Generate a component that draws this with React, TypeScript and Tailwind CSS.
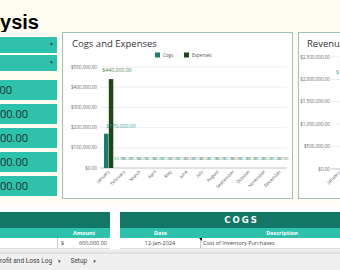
import React from "react";

const months = [
    "January", "February", "March", "April", "May", "June",
    "July", "August", "September", "October", "November", "December",
];

const kpis = [
    { value: "$1,800,000.00", end: "w-[12px]" },
    { value: "$600,000.00", end: "w-[28px]" },
    { value: "$440,000.00", end: "w-[28px]" },
    { value: "$170,000.00", end: "w-[28px]" },
    { value: "$760,000.00", end: "w-[28px]" },
];

function CogsChart() {
    const grid = [16, 36.2, 56.4, 76.6, 96.8, 117];
    const ticks = ["$500,000.00", "$400,000.00", "$300,000.00", "$200,000.00", "$100,000.00", "$0.00"];
    const slot = 187 / 12;

    return (
        <svg width="229" height="147" className="block">
            {/* legend */}
            <rect x="92" y="1.5" width="5" height="5" fill="#1b7d72" />
            <text x="100" y="6" fontSize="4.5" fill="#555">Cogs</text>
            <rect x="121" y="1.5" width="5" height="5" fill="#1f4a17" />
            <text x="129" y="6" fontSize="4.5" fill="#555">Expenses</text>

            {grid.map((y, i) => (
                <g key={i}>
                    <line x1="37" x2="224" y1={y} y2={y} stroke={i === 5 ? "#999" : "#e3e3e3"} strokeWidth="0.6" />
                    <text x="34" y={y + 1.6} fontSize="4.6" fill="#666" textAnchor="end">{ticks[i]}</text>
                </g>
            ))}

            {/* january bars */}
            <rect x="41" y="82.7" width="4.5" height="34.3" fill="#1b7d72" />
            <rect x="45.8" y="28.1" width="4.5" height="88.9" fill="#1f4a17" />
            <text x="54" y="21" fontSize="5.2" fill="#4f7d4a" textAnchor="middle">$440,000.00</text>
            <text x="58" y="77" fontSize="5.2" fill="#3aa79a" textAnchor="middle">$170,000.00</text>

            {months.map((m, i) => {
                const c = 37 + slot * i + slot / 2;
                return (
                    <g key={m}>
                        {i > 0 && (
                            <>
                                <text x={c - 3.8} y="109" fontSize="4.3" fill="#3aa79a" textAnchor="middle">$0.00</text>
                                <text x={c + 3.8} y="109" fontSize="4.3" fill="#4f7d4a" textAnchor="middle">$0.00</text>
                            </>
                        )}
                        <text
                            x={c + 2}
                            y="121"
                            fontSize="4.5"
                            fill="#555"
                            textAnchor="end"
                            transform={`rotate(-45 ${c + 2} 121)`}
                        >
                            {m}
                        </text>
                    </g>
                );
            })}
        </svg>
    );
}

function RevenueChart() {
    const grid = [6, 28.4, 50.8, 73.2, 95.6, 118];
    const ticks = ["$2,500,000.00", "$2,000,000.00", "$1,500,000.00", "$1,000,000.00", "$500,000.00", "$0.00"];

    return (
        <svg width="60" height="147" className="block">
            {grid.map((y, i) => (
                <g key={i}>
                    <line x1="32" x2="60" y1={y} y2={y} stroke={i === 5 ? "#999" : "#e3e3e3"} strokeWidth="0.6" />
                    <text x="31" y={y + 1.6} fontSize="4.6" fill="#666" textAnchor="end">{ticks[i]}</text>
                </g>
            ))}
            <text x="37" y="23" fontSize="5.2" fill="#3aa79a">$1,800,000.00</text>
            <text x="41" y="122" fontSize="4.5" fill="#555" textAnchor="end" transform="rotate(-45 41 122)">January</text>
        </svg>
    );
}

export default function App() {
    return (
        <div className="w-[340px] h-[270px] overflow-hidden bg-white flex flex-col font-['Open_Sans',sans-serif]">
            <div className="h-[205px] shrink-0 bg-[#fffdf1] flex flex-col">
                {/* title */}
                <div className="h-[32px] pt-[12px] flex">
                    <div className="w-[39px] overflow-hidden flex justify-end whitespace-nowrap">
                        <span className="text-[20px] leading-[20px] font-bold text-black font-['Liberation_Sans',sans-serif]">Cash Flow Analysis</span>
                    </div>
                </div>

                <div className="flex">
                    {/* filters and totals */}
                    <div className="w-[57px] shrink-0 pt-[5px] flex flex-col">
                        <div className="h-[16px] bg-[#2ec2ad] flex items-center justify-end pr-[3px] text-[5px] text-[#1d4f48]">▼</div>
                        <div className="h-[16px] mt-[2px] bg-[#2ec2ad] flex items-center justify-end pr-[3px] text-[5px] text-[#1d4f48]">▼</div>
                        <div className="mt-[9px] flex flex-col gap-[4px]">
                            {kpis.map((k, i) => (
                                <div key={i} className="h-[20px] bg-[#2ec2ad] flex items-center">
                                    <div className={`${k.end} overflow-hidden flex justify-end whitespace-nowrap`}>
                                        <span className="text-[11px] leading-[14px] text-[#1e2f2c]">{k.value}</span>
                                    </div>
                                </div>
                            ))}
                        </div>
                    </div>

                    {/* cogs and expenses chart */}
                    <div className="ml-[5px] w-[231px] h-[167px] shrink-0 bg-white border border-[#9cc3b6]">
                        <div className="h-[18px] pt-[6px] pl-[9px] text-[9.5px] leading-[10px] text-[#333]">Cogs and Expenses</div>
                        <CogsChart />
                    </div>

                    {/* revenue chart */}
                    <div className="ml-[5px] w-[60px] h-[167px] shrink-0 bg-white border border-[#9cc3b6]">
                        <div className="h-[18px] pt-[6px] pl-[8px] text-[9.5px] leading-[10px] text-[#333] whitespace-nowrap">Revenue</div>
                        <RevenueChart />
                    </div>
                </div>
            </div>

            {/* tables */}
            <div className="h-[44px] shrink-0 pt-[7px] flex">
                <div className="-ml-[92px] w-[202px] shrink-0 flex flex-col">
                    <div className="h-[16px] bg-[#137766]" />
                    <div className="h-[10px] bg-[#2ec2ad] flex text-[5.5px] font-bold text-white">
                        <div className="w-[150px] flex items-center justify-center">Description</div>
                        <div className="flex-1 flex items-center justify-center">Amount</div>
                    </div>
                    <div className="h-[11px] flex text-[5.5px] text-[#444] border-b border-[#ddd]">
                        <div className="w-[150px] border-r border-[#ccc]" />
                        <div className="flex-1 flex items-center justify-between pl-[3px] pr-[3px]">
                            <span>$</span>
                            <span>600,000.00</span>
                        </div>
                    </div>
                </div>

                <div className="ml-[10px] w-[243px] shrink-0 flex flex-col">
                    <div className="h-[16px] bg-[#137766] flex items-center justify-center">
                        <span className="text-[8.5px] font-bold text-white tracking-[2px] font-['DejaVu_Sans',sans-serif]">COGS</span>
                    </div>
                    <div className="h-[10px] bg-[#2ec2ad] flex text-[5.5px] font-bold text-white">
                        <div className="w-[81px] flex items-center justify-center">Date</div>
                        <div className="flex-1 flex items-center justify-center">Description</div>
                    </div>
                    <div className="h-[11px] flex text-[5.5px] text-[#444] border-b border-[#ddd]">
                        <div className="w-[81px] border-r border-[#ccc] flex items-center justify-center">12-Jan-2024</div>
                        <div className="relative flex-1 flex items-center pl-[2px]">
                            <span className="absolute -left-[2px] top-0 w-0 h-0 border-l-[3px] border-l-transparent border-t-[3px] border-t-black" />
                            Cost of Inventory Purchases
                        </div>
                    </div>
                </div>
            </div>

            {/* scroll shadow */}
            <div className="h-[5px] shrink-0 bg-gradient-to-b from-[#f7f7f7] to-[#dcdcdc]" />

            {/* sheet tabs */}
            <div className="flex-1 bg-[#f0f0f0] flex items-center text-[6.5px] text-[#3c4043] font-['Roboto',sans-serif] whitespace-nowrap">
                <div className="-ml-[4px] flex items-center gap-[5px]">
                    <span>Profit and Loss Log</span>
                    <span className="text-[4.5px]">▼</span>
                </div>
                <div className="ml-[9px] flex items-center gap-[5px]">
                    <span>Setup</span>
                    <span className="text-[4.5px]">▼</span>
                </div>
            </div>
        </div>
    );
}
